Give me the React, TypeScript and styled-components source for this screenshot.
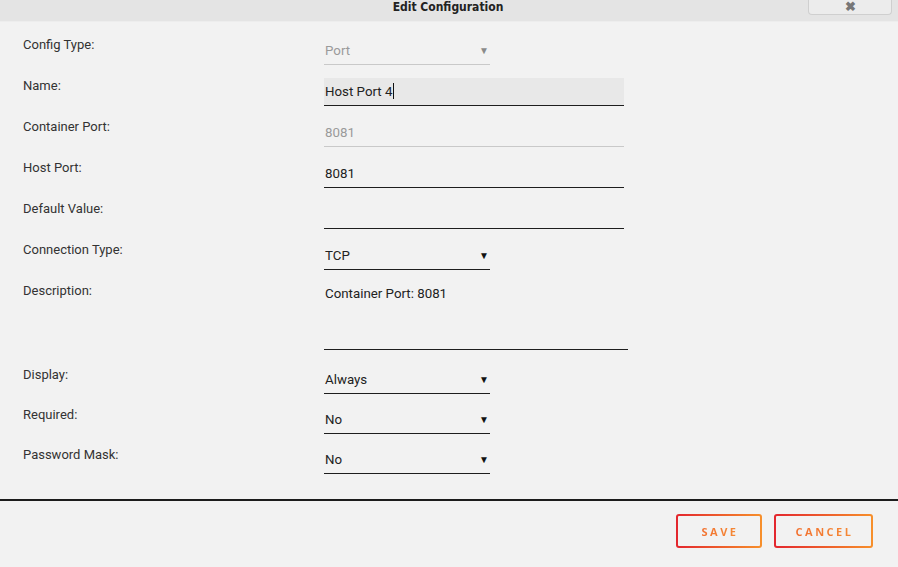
import styled, { createGlobalStyle } from "styled-components";

const GlobalStyle = createGlobalStyle`
  html, body {
    margin: 0;
    padding: 0;
    background: #f2f2f2;
  }
  body {
    font-family: Roboto, "Liberation Sans", sans-serif;
  }
`;

const Dialog = styled.div`
  width: 898px;
  height: 567px;
  background: #f2f2f2;
  display: flex;
  flex-direction: column;
  overflow: hidden;
`;

const Header = styled.div`
  position: relative;
  height: 21px;
  background: #e4e4e4;
  border-bottom: 1px solid #ededed;
  display: flex;
  justify-content: center;
  align-items: flex-start;
`;

const Title = styled.span`
  font-family: "Liberation Sans Narrow", "DejaVu Sans Condensed", sans-serif;
  font-weight: bold;
  font-size: 12px;
  line-height: 14px;
  color: #222;
  padding-right: 2px;
`;

const CloseButton = styled.div`
  position: absolute;
  right: 6px;
  top: -2px;
  width: 82px;
  height: 16px;
  background: #ececec;
  border: 1px solid #cfcfcf;
  border-top: none;
  border-radius: 0 0 4px 4px;
  display: flex;
  justify-content: center;
  align-items: center;
  color: #777;
  font-size: 13px;
  font-weight: bold;
`;

const Form = styled.div`
  padding: 15px 0 0 23px;
  flex: 0 0 auto;
  height: 477px;
  box-sizing: border-box;
`;

const Row = styled.div<{ $h?: number }>`
  display: flex;
  height: ${(p) => p.$h ?? 41}px;
`;

const Label = styled.div<{ $offset?: number }>`
  width: 301px;
  margin-top: ${(p) => p.$offset ?? 0}px;
  font-size: 13px;
  line-height: 16px;
  color: #333;
`;

const Field = styled.div<{ $w: number; $h?: number; $muted?: boolean; $filled?: boolean }>`
  width: ${(p) => p.$w}px;
  height: ${(p) => p.$h ?? 28}px;
  box-sizing: border-box;
  border-bottom: ${(p) => (p.$muted ? "1px solid #c9c9c9" : "1.5px solid #1e1e1e")};
  background: ${(p) => (p.$filled ? "#e8e8e8" : "transparent")};
  display: flex;
  align-items: ${(p) => (p.$h ? "flex-start" : "center")};
  justify-content: space-between;
  padding: ${(p) => (p.$h ? "3px 0 0 1px" : "0 1px 1px 1px")};
  font-size: 13.3px;
  color: ${(p) => (p.$muted ? "#9a9a9a" : "#222")};
`;

const Caret = styled.span`
  display: inline-block;
  width: 1px;
  height: 16px;
  background: #111;
  vertical-align: -3px;
  margin-left: 1px;
`;

const Arrow = styled.span<{ $muted?: boolean }>`
  font-size: 10px;
  color: ${(p) => (p.$muted ? "#8a8a8a" : "#111")};
`;

const Divider = styled.div`
  height: 2px;
  background: #1c1c1c;
`;

const Footer = styled.div`
  display: flex;
  justify-content: flex-end;
  gap: 12px;
  padding: 13px 25px 0 0;
`;

const ActionButton = styled.div<{ $w: number }>`
  width: ${(p) => p.$w}px;
  height: 34px;
  box-sizing: border-box;
  border: 2px solid transparent;
  border-radius: 3px;
  background: linear-gradient(#f2f2f2, #f2f2f2) padding-box,
    linear-gradient(90deg, #e3262e, #f7902b) border-box;
  display: flex;
  justify-content: center;
  align-items: center;
`;

const ButtonText = styled.span`
  font-family: "Open Sans", sans-serif;
  font-weight: bold;
  font-size: 11px;
  letter-spacing: 2.5px;
  padding-left: 2px;
  background: linear-gradient(90deg, #f2702f, #f58a36);
  -webkit-background-clip: text;
  background-clip: text;
  color: transparent;
`;

type Item = {
  label: string;
  value: string;
  width: number;
  select?: boolean;
  muted?: boolean;
  filled?: boolean;
  caret?: boolean;
};

const topRows: Item[] = [
  { label: "Config Type:", value: "Port", width: 166, select: true, muted: true },
  { label: "Name:", value: "Host Port 4", width: 300, filled: true, caret: true },
  { label: "Container Port:", value: "8081", width: 300, muted: true },
  { label: "Host Port:", value: "8081", width: 300 },
  { label: "Default Value:", value: "", width: 300 },
  { label: "Connection Type:", value: "TCP", width: 166, select: true },
];

const bottomRows: Item[] = [
  { label: "Display:", value: "Always", width: 166, select: true },
  { label: "Required:", value: "No", width: 166, select: true },
  { label: "Password Mask:", value: "No", width: 166, select: true },
];

function FormRow({ item, height, offset }: { item: Item; height?: number; offset?: number }) {
  return (
    <Row $h={height}>
      <Label $offset={offset}>{item.label}</Label>
      <Field $w={item.width} $muted={item.muted} $filled={item.filled}>
        <span>
          {item.value}
          {item.caret && <Caret />}
        </span>
        {item.select && <Arrow $muted={item.muted}>▼</Arrow>}
      </Field>
    </Row>
  );
}

export default function App() {
  return (
    <Dialog>
      <GlobalStyle />
      <Header>
        <Title>Edit Configuration</Title>
        <CloseButton>✖</CloseButton>
      </Header>
      <Form>
        {topRows.map((r) => (
          <FormRow key={r.label} item={r} />
        ))}
        <Row $h={83}>
          <Label>Description:</Label>
          <Field $w={304} $h={67}>
            Container Port: 8081
          </Field>
        </Row>
        {bottomRows.map((r) => (
          <FormRow key={r.label} item={r} height={40} offset={1} />
        ))}
      </Form>
      <Divider />
      <Footer>
        <ActionButton $w={86}>
          <ButtonText>SAVE</ButtonText>
        </ActionButton>
        <ActionButton $w={99}>
          <ButtonText>CANCEL</ButtonText>
        </ActionButton>
      </Footer>
    </Dialog>
  );
}
